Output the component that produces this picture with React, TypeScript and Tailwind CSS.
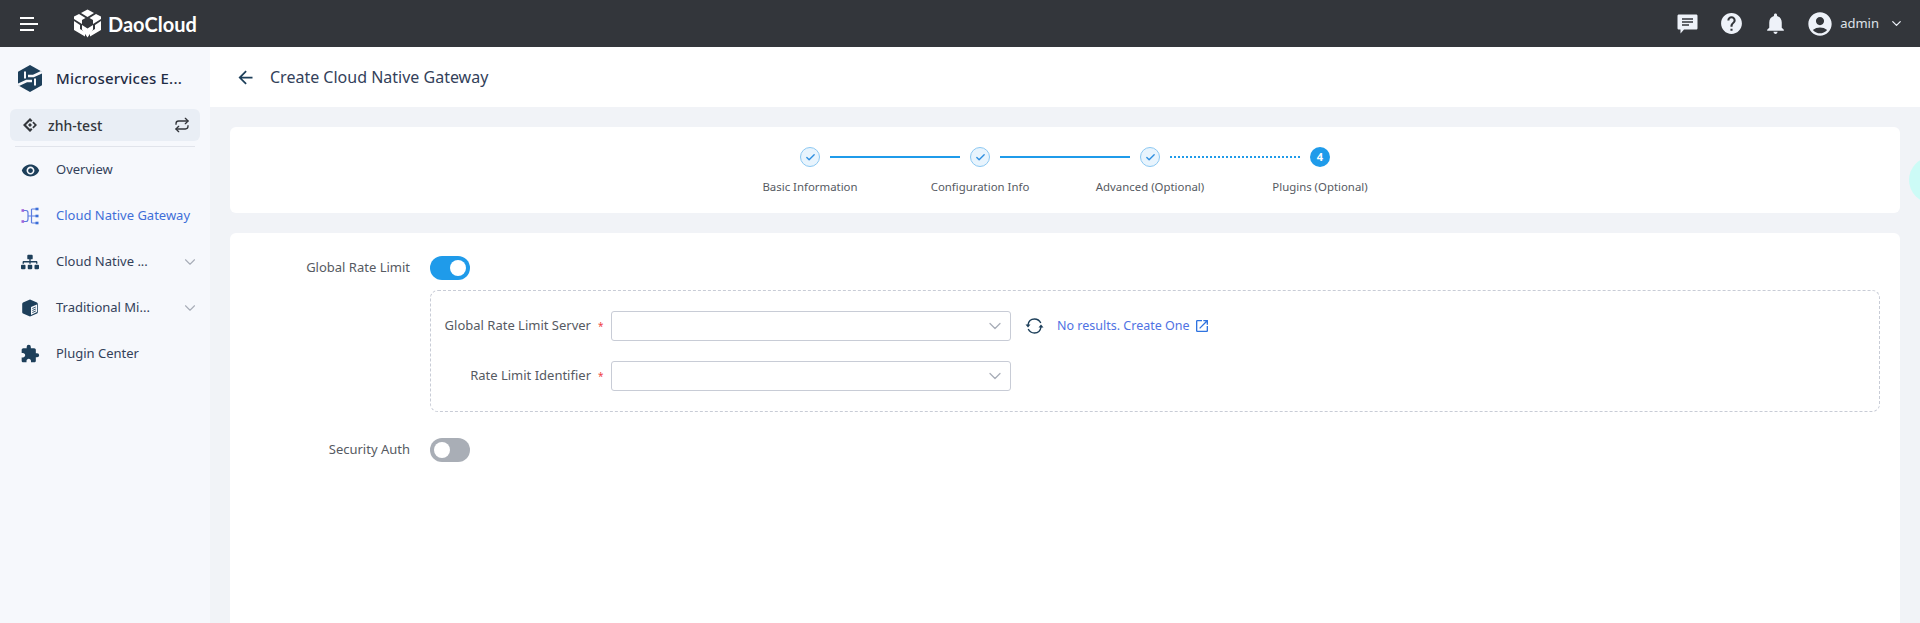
import { Check, ChevronDown, Repeat } from 'lucide-react';
import { FaSitemap } from 'react-icons/fa';
import { MdAccountCircle, MdArrowBack, MdExtension, MdHelp, MdNotifications, MdOpenInNew, MdRemoveRedEye } from 'react-icons/md';

function ProductLogo() {
  return (
    <svg width="24" height="27" viewBox="0 0 24 27" fill="none">
      <path d="M12 0 L24 6.7 V20.3 L12 27 L0 20.3 V6.7 Z" fill="#1d3f5a" />
      <path d="M24 7 L15.5 11 H10" stroke="#f6f8fc" strokeWidth="2.6" />
      <path d="M0 20 L8.5 16 H14" stroke="#f6f8fc" strokeWidth="2.6" />
      <path d="M7 6.5 V13.5 M17 13.5 V20.5" stroke="#f6f8fc" strokeWidth="2" />
    </svg>
  );
}

function DaoLogo() {
  return (
    <svg width="29" height="29" viewBox="0 0 29 29" fill="#fff">
      <path d="M14.5 0.5 L21 4 L14.5 8 L8 4 Z" />
      <path d="M6 5 L12.5 9 L9 11 V15 L1 10 V7.5 Z" />
      <path d="M23 5 L16.5 9 L20 11 V15 L28 10 V7.5 Z" />
      <path d="M1 12 L7 16 V20 L12 23 V27.5 L1 21 Z" />
      <path d="M28 12 L22 16 V20 L17 23 V27.5 L28 21 Z" />
      <path d="M9 16 L14.5 19.5 L20 16 V20.5 L14.5 28.5 L9 20.5 Z" />
    </svg>
  );
}

function GatewayIcon() {
  return (
    <svg width="18" height="18" viewBox="0 0 18 18" fill="none" stroke="#5b7de0" strokeWidth="1.2">
      <path d="M1.5 3.5 H5 C6.5 3.5 7 4.5 7 6 V12 C7 13.5 6.5 14.5 5 14.5 H1.5" />
      <path d="M7 9 H15 M10.5 2 V16 M10.5 2 H15 M10.5 16 H15" />
      <rect x="0.5" y="2.2" width="2.6" height="2.6" fill="#a062d8" stroke="none" />
      <rect x="0.5" y="13.2" width="2.6" height="2.6" fill="#a062d8" stroke="none" />
      <rect x="14.5" y="0.7" width="3" height="2.6" fill="#3b6fd8" stroke="none" />
      <rect x="14.5" y="7.7" width="3" height="2.6" fill="#3b6fd8" stroke="none" />
      <rect x="14.5" y="14.7" width="3" height="2.6" fill="#3b6fd8" stroke="none" />
    </svg>
  );
}

function CubeIcon() {
  return (
    <svg width="18" height="18" viewBox="0 0 18 18">
      <path d="M9 0.5 L16 3.5 Q16.8 4 16.8 5 V13 Q16.8 14 16 14.5 L9 17.5 L2 14.5 Q1.2 14 1.2 13 V5 Q1.2 4 2 3.5 Z" fill="#1d3f5a" />
      <path d="M10 8 L16 5.5 V13 L10 16 Z" fill="#f6f8fc" />
      <path d="M11.3 9.5 L14.8 8 M11.3 11.5 L14.8 10 M11.3 13.5 L14.8 12" stroke="#1d3f5a" strokeWidth="0.9" />
    </svg>
  );
}

function WorkspaceIcon() {
  return (
    <svg width="14" height="14" viewBox="0 0 14 14" fill="#33363b">
      <path d="M7 0 L9.5 2.5 L8 4 L7 3 L3 7 L7 11 L8 10 L9.5 11.5 L7 14 L0 7 Z" />
      <path d="M10.5 3.5 L14 7 L10.5 10.5 L9.3 9.3 L11.6 7 L9.3 4.7 Z" />
      <path d="M7 5 L9 7 L7 9 L5 7 Z" />
    </svg>
  );
}

function CommentIcon() {
  return (
    <svg width="21" height="20" viewBox="0 0 21 20">
      <path d="M2 0.5 H19 C20 0.5 20.5 1 20.5 2 V14 C20.5 15 20 15.5 19 15.5 H7 L3.5 19.5 V15.5 H2 C1 15.5 0.5 15 0.5 14 V2 C0.5 1 1 0.5 2 0.5 Z" fill="#eef2f9" />
      <path d="M5 5 H16 M5 8 H16 M5 11 H12" stroke="#33363b" strokeWidth="1.6" />
    </svg>
  );
}

function RefreshIcon() {
  return (
    <svg width="19" height="18" viewBox="0 0 19 18" fill="none" className="text-[#1d3f5a]">
      <path d="M3 8 C3.5 4.5 6 2 9.5 2 C12.5 2 14.5 3.5 15.8 6" stroke="currentColor" strokeWidth="1.4" />
      <path d="M16 10 C15.5 13.5 13 16 9.5 16 C6.5 16 4.5 14.5 3.2 12" stroke="currentColor" strokeWidth="1.4" />
      <path d="M0.5 7.5 H5.5 L3 10.5 Z" fill="currentColor" />
      <path d="M13.5 10.5 H18.5 L16 7.5 Z" fill="currentColor" />
    </svg>
  );
}

function NavItem({ icon, label, active, chevron }: { icon: React.ReactNode; label: string; active?: boolean; chevron?: boolean }) {
  return (
    <div className="flex h-[46px] items-center pl-[20px] pr-[11px]">
      <span className="flex w-5 justify-center">{icon}</span>
      <span className={`ml-4 flex-1 text-[13px] ${active ? 'text-[#3f6fd8]' : 'text-[#33415a]'}`}>{label}</span>
      {chevron && <ChevronDown size={18} strokeWidth={1.5} className="text-[#a8adb8]" />}
    </div>
  );
}

function Step({ done }: { done?: boolean }) {
  return done ? (
    <span className="flex h-5 w-5 items-center justify-center rounded-full border border-[#8cc8f2] bg-[#e8f4fd] text-[#2f8fe0]">
      <Check size={11} strokeWidth={3} />
    </span>
  ) : (
    <span className="flex h-5 w-5 items-center justify-center rounded-full bg-[#1f9bea] text-[11px] font-bold text-white">4</span>
  );
}

function Toggle({ on }: { on?: boolean }) {
  return (
    <span className={`flex h-6 w-10 items-center rounded-full px-[4px] ${on ? 'justify-end bg-[#1f9bea]' : 'justify-start bg-[#a9aeb6]'}`}>
      <span className="h-4 w-4 rounded-full bg-white" />
    </span>
  );
}

function Select() {
  return (
    <div className="flex h-[30px] w-[400px] items-center justify-end rounded-[3px] border border-[#c8ccd6] bg-white pr-[5px]">
      <ChevronDown size={20} strokeWidth={1.5} className="text-[#a8adb8]" />
    </div>
  );
}

export default function App() {
  const steps = ['Basic Information', 'Configuration Info', 'Advanced (Optional)', 'Plugins (Optional)'];

  return (
    <div className="relative flex h-screen flex-col overflow-hidden bg-[#f1f3f7] font-['Noto_Sans',sans-serif]">
      <header className="flex h-[47px] shrink-0 items-center bg-[#33363b] pl-[20px] pr-[16px] text-white">
        <div className="flex w-[18px] flex-col items-start gap-[4px]">
          <span className="h-[2px] w-[14px] bg-white" />
          <span className="h-[2px] w-[18px] bg-white" />
          <span className="h-[2px] w-[14px] bg-white" />
        </div>
        <span className="ml-[35px]"><DaoLogo /></span>
        <span className="ml-[6px] font-['Lato',sans-serif] text-[20px] font-bold leading-none">DaoCloud</span>
        <div className="ml-auto flex items-center">
          <CommentIcon />
          <MdHelp size={25} className="ml-[21px] text-[#eef2f9]" />
          <MdNotifications size={25} className="ml-[19px] text-[#eef2f9]" />
          <MdAccountCircle size={28} className="ml-[18px] text-[#eef2f9]" />
          <span className="ml-[6px] text-[13px] text-[#dfe3ea]">admin</span>
          <ChevronDown size={15} strokeWidth={2} className="ml-[10px] text-[#eef2f9]" />
        </div>
      </header>

      <div className="flex min-h-0 flex-1">
        <aside className="w-[210px] shrink-0 bg-[#f6f8fc]">
          <div className="flex h-[62px] items-center pl-[18px]">
            <ProductLogo />
            <span className="ml-[14px] text-[15px] font-medium tracking-[0.2px] text-[#1f2d45]">Microservices E...</span>
          </div>
          <div className="mx-[10px] flex h-[32px] items-center rounded-[6px] bg-[#e9eef5] pl-[13px] pr-[10px]">
            <WorkspaceIcon />
            <span className="ml-[11px] flex-1 text-[14px] font-medium text-[#33363b]">zhh-test</span>
            <Repeat size={16} strokeWidth={2} className="text-[#33363b]" />
          </div>
          <div className="mx-[15px] mt-[5px] h-px bg-[#e1e4eb]" />
          <NavItem icon={<MdRemoveRedEye size={19} className="text-[#1d3f5a]" />} label="Overview" />
          <NavItem icon={<GatewayIcon />} label="Cloud Native Gateway" active />
          <NavItem icon={<FaSitemap size={18} className="text-[#1d3f5a]" />} label="Cloud Native ..." chevron />
          <NavItem icon={<CubeIcon />} label="Traditional Mi..." chevron />
          <NavItem icon={<MdExtension size={20} className="text-[#1d3f5a]" />} label="Plugin Center" />
        </aside>

        <main className="flex min-w-0 flex-1 flex-col">
          <div className="flex h-[60px] shrink-0 items-center bg-white pl-[25px]">
            <MdArrowBack size={21} className="text-[#1d3f5a]" />
            <span className="ml-[14px] text-[16px] text-[#33415a]">Create Cloud Native Gateway</span>
          </div>
          <div className="flex min-h-0 flex-1 flex-col gap-5 px-5 pt-5">
            <section className="flex h-[86px] shrink-0 flex-col items-center rounded-[6px] bg-white pt-5">
              <div className="flex items-center gap-2.5">
                <Step done />
                <span className="h-[2px] w-[130px] bg-[#1f9bea]" />
                <Step done />
                <span className="h-[2px] w-[130px] bg-[#1f9bea]" />
                <Step done />
                <span className="w-[130px] border-t-2 border-dotted border-[#1f9bea]" />
                <Step />
              </div>
              <div className="mt-[11px] grid w-[680px] grid-cols-4 text-center text-[11.4px] text-[#565a62]">
                {steps.map((s) => (
                  <span key={s}>{s}</span>
                ))}
              </div>
            </section>

            <section className="flex-1 rounded-t-[6px] bg-white pr-5 pt-[23px]">
              <div className="flex h-6 items-center">
                <span className="w-[180px] text-right text-[13px] text-[#565a62]">Global Rate Limit</span>
                <span className="ml-5"><Toggle on /></span>
              </div>
              <div className="ml-[200px] mt-[10px] flex h-[122px] flex-col gap-5 rounded-[8px] border border-dashed border-[#c8ccd6] pt-5">
                <div className="flex items-center">
                  <span className="w-[160px] text-right text-[13px] text-[#565a62]">Global Rate Limit Server</span>
                  <span className="w-5 pl-[7px] text-[10px] leading-none text-[#ef4444]">*</span>
                  <Select />
                  <span className="ml-[14px]"><RefreshIcon /></span>
                  <span className="ml-[13px] text-[12.5px] text-[#4f72e3]">No results. Create One</span>
                  <MdOpenInNew size={16} className="ml-[4px] text-[#2f73e0]" />
                </div>
                <div className="flex items-center">
                  <span className="w-[160px] text-right text-[13px] text-[#565a62]">Rate Limit Identifier</span>
                  <span className="w-5 pl-[7px] text-[10px] leading-none text-[#ef4444]">*</span>
                  <Select />
                </div>
              </div>
              <div className="mt-[26px] flex h-6 items-center">
                <span className="w-[180px] text-right text-[13px] text-[#565a62]">Security Auth</span>
                <span className="ml-5"><Toggle /></span>
              </div>
            </section>
          </div>
        </main>
      </div>

      <span className="absolute left-[1909px] top-[157px] h-[46px] w-[46px] rounded-full bg-[#ccfbf6]" />
    </div>
  );
}
